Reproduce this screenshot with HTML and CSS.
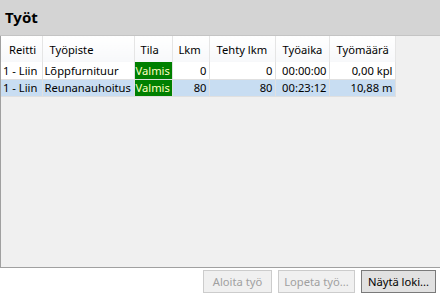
FILE: index.html
```html
<!DOCTYPE html>
<html lang="fi">
<head>
    <meta charset="UTF-8">
    <title>Työt</title>
    <link rel="stylesheet" href="styles.css">
</head>
<body>
    <div id="panel">
        <div class="title">Työt</div>
        <div class="grid">
            <table class="jobs">
                <tr class="head">
                    <th class="c1">Reitti</th>
                    <th class="c2">Työpiste</th>
                    <th class="c3">Tila</th>
                    <th class="c4">Lkm</th>
                    <th class="c5">Tehty lkm</th>
                    <th class="c6">Työaika</th>
                    <th class="c7">Työmäärä</th>
                </tr>
                <tr>
                    <td>1 - Liin</td>
                    <td>Lõppfurnituur</td>
                    <td class="state">Valmis</td>
                    <td class="num">0</td>
                    <td class="num">0</td>
                    <td class="num">00:00:00</td>
                    <td class="num">0,00 kpl</td>
                </tr>
                <tr class="sel">
                    <td>1 - Liin</td>
                    <td>Reunanauhoitus</td>
                    <td class="state">Valmis</td>
                    <td class="num">80</td>
                    <td class="num">80</td>
                    <td class="num">00:23:12</td>
                    <td class="num">10,88 m</td>
                </tr>
            </table>
        </div>
        <div class="buttons">
            <button class="btn b1" disabled>Aloita työ</button>
            <button class="btn b2" disabled>Lopeta työ...</button>
            <button class="btn b3 main">Näytä loki...</button>
        </div>
    </div>
</body>
</html>
```
FILE: styles.css
```css
* {
    margin: 0;
    padding: 0;
    box-sizing: border-box;
}
body {
    width: 440px;
    height: 295px;
    overflow: hidden;
    font-family: "Noto Sans", "Open Sans", sans-serif;
    font-size: 11.2px;
    color: #000000;
    background: #ffffff;
}
#panel {
    display: flex;
    flex-direction: column;
    height: 295px;
}
.title {
    height: 36px;
    background: #d4d4d4;
    border-bottom: 1px solid #c4c4c4;
    font-weight: bold;
    font-size: 15px;
    line-height: 34px;
    padding-left: 5px;
}
.grid {
    flex: 1;
    background: #f0f0f0;
    border-left: 1px solid #a0a0a0;
    border-bottom: 1px solid #a0a0a0;
    overflow: hidden;
}
.jobs {
    border-collapse: collapse;
    table-layout: fixed;
    width: 394px;
    background: #ffffff;
}
.jobs th {
    height: 26px;
    font-weight: normal;
    text-align: left;
    padding-left: 7px;
    border-right: 1px solid #e5e5e5;
    background: linear-gradient(#ffffff, #f7f8fa);
    white-space: nowrap;
    overflow: hidden;
}
.jobs th.c1 {
    padding-left: 8px;
}
.jobs th.c3, .jobs th.c4 {
    padding-left: 6px;
}
.jobs td {
    height: 17px;
    line-height: 15px;
    padding: 0 2px;
    border-right: 1px solid #e0e0e0;
    border-bottom: 1px solid #e0e0e0;
    white-space: nowrap;
    overflow: hidden;
}
.c1 { width: 41px; }
.c2 { width: 92px; }
.c3 { width: 38px; }
.c4 { width: 37px; }
.c5 { width: 66px; }
.c6 { width: 54px; }
.c7 { width: 66px; }
.jobs td.num {
    text-align: right;
}
.jobs td.state {
    background: #008000;
    color: #ffffc0;
    padding: 0 1px;
}
.sel td {
    background: #c8ddf2;
}
.buttons {
    height: 27px;
    display: flex;
    justify-content: flex-end;
    align-items: flex-start;
    gap: 6px;
    padding: 2px 4px 0 0;
}
.btn {
    font-family: "Noto Sans", "Open Sans", sans-serif;
    font-size: 11.2px;
    height: 23px;
    padding: 0;
    background: #f0f0f0;
    border: 1px solid #cccccc;
    color: #a0a0a0;
}
.b1 { width: 69px; }
.b2 { width: 77px; }
.b3 { width: 75px; }
.btn.main {
    background: #e1e1e1;
    border: 1px solid #7a7a7a;
    color: #000000;
}
```
